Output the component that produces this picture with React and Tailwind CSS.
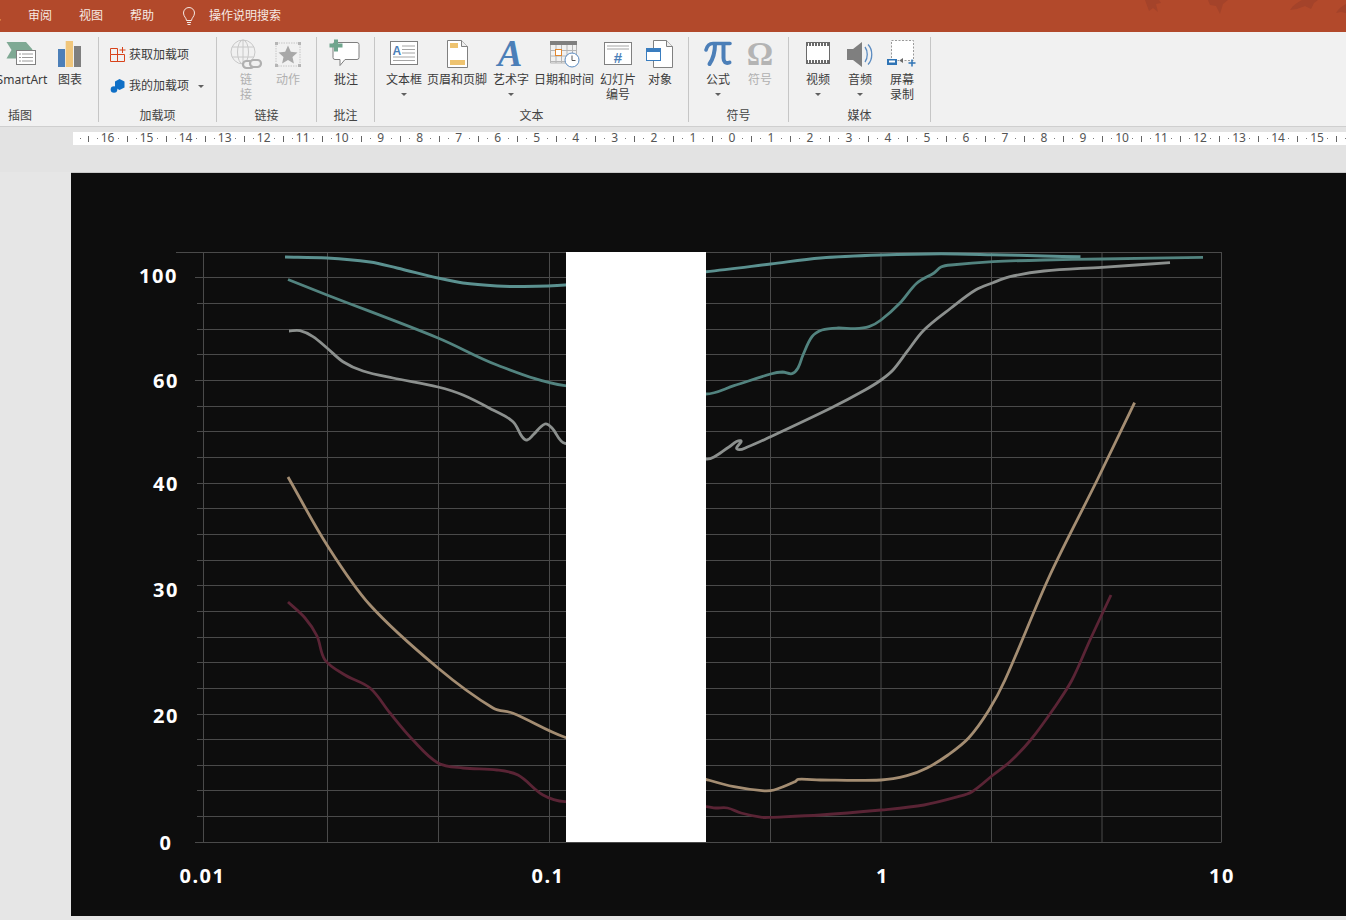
import React from "react";

const smooth = (p) => {
  const len = (u, v) => Math.hypot(u[0] - v[0], u[1] - v[1]) || 1;
  let d = `M${p[0][0]} ${p[0][1]}`;
  for (let i = 0; i < p.length - 1; i++) {
    const a = p[Math.max(0, i - 1)], b = p[i], c = p[i + 1], e = p[Math.min(p.length - 1, i + 2)];
    const seg = len(b, c) / 3;
    const la = len(a, c), le = len(b, e);
    const c1 = [b[0] + ((c[0] - a[0]) / la) * seg, b[1] + ((c[1] - a[1]) / la) * seg];
    const c2 = [c[0] - ((e[0] - b[0]) / le) * seg, c[1] - ((e[1] - b[1]) / le) * seg];
    d += `C${c1[0].toFixed(1)} ${c1[1].toFixed(1)} ${c2[0].toFixed(1)} ${c2[1].toFixed(1)} ${c[0]} ${c[1]}`;
  }
  return d;
};

const curves = [
  { c: "#5b9190", w: 3, p: [[285,257],[327,258],[370,262],[397,268],[438,278],[463,283],[497,286],[520,286.5],[565,285],[706,271.7],[770.6,264],[820.5,258],[881,255],[941,253.7],[993,254.7],[1044,256],[1080.5,256.7]] },
  { c: "#52837f", w: 2.8, p: [[288,279.5],[327,295],[438,338],[497,365],[565,385.7],[706,394],[734,385.7],[770.6,374],[782.6,372],[792,373.7],[798,368],[803,355],[812,336.7],[822,330],[838,328],[855,328.7],[869,326.7],[881,320],[900,303],[917,283],[934,273],[941,267],[951,265],[993,261.7],[1044,260],[1102,259],[1203,257.3]] },
  { c: "#8c908e", w: 2.8, p: [[289,331],[300,330.7],[313,336.7],[327,348],[343,361.7],[363,371],[393,378],[438,387],[463,395],[493,410],[513,421.7],[522,436.7],[527,440],[533,435],[545,424],[552,428],[565,443.3],[706,459],[714,457],[729,447],[740.6,440.7],[737,449],[748,446.7],[770.6,436.7],[831,408],[865,390],[881,380],[893,370],[907,351.7],[924,330],[951,308],[975.5,290],[993,282.7],[1010,276.7],[1044,271],[1102,267.3],[1170,262.7]] },
  { c: "#a48d72", w: 2.8, p: [[288,477],[327,545],[370,605],[438,668],[493,708],[513,713.3],[565,737.3],[706,779.3],[734,786.7],[762,790.7],[774,790],[795,781.7],[798,779.3],[820.5,780],[881,780],[907,775.7],[927,768],[948,755],[968.6,738],[989,710],[1005,680],[1050,575],[1097.7,479],[1134.6,402.7]] },
  { c: "#5a2435", w: 2.8, p: [[288,602],[305,618],[317,636],[325,660],[345,675],[370,688],[390,713],[412,739],[438,763],[463,768],[497,770],[518,775],[543,795],[565,801.7],[706,806.7],[715.5,808],[727.5,808],[741,813],[762,817.3],[770.6,817.3],[820.5,815],[881,810],[924,805],[958,796.7],[972,791.7],[993,775],[1010,761.7],[1030.6,740],[1055,706.7],[1072,680],[1090,640],[1111,595]] },
];

const hLines = Array.from({ length: 24 }, (_, i) => Math.floor(252.3 + i * 25.652) + 0.5);
const vLines = [203.5, 327.5, 438.5, 549.5, 770.5, 881, 991.5, 1102, 1221.5];
const yLabels = [["100", 139, 282.5], ["60", 153, 388], ["40", 153, 491], ["30", 153, 597], ["20", 153, 722.5], ["0", 159.5, 849.5]];
const xLabels = [["0.01", 179.5], ["0.1", 531.5], ["1", 876], ["10", 1209]];

const Caret = () => <span className="block w-0 h-0 border-x-[3px] border-x-transparent border-t-[3px] border-t-[#606060]" />;

const Ico = ({ x, w, children }) => (
  <svg width={w} height={35} viewBox={`${x} 37 ${w} 35`} className="block shrink-0">{children}</svg>
);

const Item = ({ x, w, l1, l2, caret, off, children }) => (
  <div className={`flex flex-col items-center shrink-0 ${off ? "text-[#b0b0b0]" : "text-[#3c3c3c]"}`} style={{ width: w }}>
    <Ico x={x} w={w}>{children}</Ico>
    <div className="h-[15px] leading-[15px] whitespace-nowrap">{l1}</div>
    {l2 && <div className="h-[15px] leading-[15px] whitespace-nowrap">{l2}</div>}
    {caret && <div className="h-[15px] flex items-center"><Caret /></div>}
  </div>
);

const Group = ({ width, label, children, className = "", labelClass = "text-center" }) => (
  <div className="h-[85px] mt-[5px] flex flex-col border-r border-[#c6c6c6] shrink-0" style={{ width }}>
    <div className={`h-[71px] flex ${className}`}>{children}</div>
    <div className={`h-[14px] leading-[16px] text-[#444444] ${labelClass}`}>{label}</div>
  </div>
);

const Dot = ({ cls = "" }) => <span className={`block w-px h-px bg-[#777777] ${cls}`} />;

const RulerCell = ({ n }) => (
  <div className="flex items-center w-[39.02px] shrink-0 h-full">
    <span className="block w-px h-[6px] bg-[#666666] shrink-0" />
    <div className="grid grid-cols-[1fr_20px_1fr] items-center flex-1">
      <Dot cls="justify-self-end" />
      <span className="text-center leading-[13px] mb-[2px]">{n}</span>
      <Dot cls="justify-self-start" />
    </div>
  </div>
);

export default function App() {
  const nums = [];
  for (let k = -16; k <= 16; k++) nums.push(Math.abs(k));
  return (
    <div className="w-[1346px] h-[920px] overflow-hidden bg-[#e6e6e6] flex flex-col text-[12px] font-['Noto_Sans','Noto_Sans_CJK_SC',sans-serif]">
      {/* title tabs */}
      <div className="relative h-[32px] bg-[#b2492b] flex items-center text-[#f6e9e4] shrink-0 overflow-hidden">
        <div className="flex items-center gap-[27px] ml-[-23px]">
          <span>插入</span><span>审阅</span><span>视图</span><span>帮助</span>
        </div>
        <svg width="16" height="20" viewBox="0 0 16 20" fill="none" stroke="#f6e9e4" strokeWidth="1" className="ml-[27px]">
          <path d="M5.500 14.500C5.500 12 2.500 10.500 2.500 7a5.500 5.500 0 0 1 11 0c0 3.500-3 5-3 7.500z" />
          <path d="M6 16.500h4M6.500 18.500h3" />
        </svg>
        <span className="ml-[12px]">操作说明搜索</span>
        <svg width="206" height="16" viewBox="1140 0 206 16" fill="#a4432a" className="absolute right-0 top-0">
          <path d="M1145 0h14l2 3-5 1 2 8-5-4-4 3z" />
          <path d="M1208 0h20l-5 4-3 10-4-8-6-1z" />
          <path d="M1290 10c3-5 8-8 12-10h16l-4 3-3 6-6-3-8 3z" />
          <path d="M1336 13c2-4 6-7 10-9v9l-5-1z" />
        </svg>
      </div>

      {/* ribbon */}
      <div className="h-[95px] bg-[#f1f1f1] border-b border-[#cfcfcf] flex shrink-0 overflow-hidden">
        <Group width={99} label="插图" labelClass="text-center w-[40px]">
          <div className="flex ml-[-2px]">
            <Item x={-2} w={48} l1="SmartArt">
              <path d="M6.500 42H26l6.500 7.500L26 58.500H6.500L11.500 50z" fill="#7fa994" />
              <rect x="16.500" y="50.500" width="19" height="14" fill="#fff" stroke="#808080" />
              <path d="M19 54h2M22 54h11M19 57.500h2M22 57.500h11M19 61h2M22 61h11" stroke="#9a9a9a" />
            </Item>
            <Item x={46} w={48} l1="图表">
              <rect x="58" y="49" width="7" height="18" fill="#4c7fb8" />
              <rect x="65.700" y="41" width="7.300" height="26" fill="#f0c67c" />
              <rect x="74" y="46" width="7" height="21" fill="#7f7f7f" />
            </Item>
          </div>
        </Group>

        <Group width={118} label="加载项" className="flex-col">
          <div className="flex items-center h-[36px] pl-[11px] text-[#3c3c3c]">
            <svg width="16" height="16" viewBox="0 0 16 16" fill="none" stroke="#d8431a" strokeWidth="1" className="mr-[3px]">
              <path d="M.5 7.500h14v7H.5zM.5 7.500v-6h7v13M12.500 0v6M9.500 3h6" />
            </svg>
            获取加载项
          </div>
          <div className="flex items-center h-[26px] pl-[11px] text-[#3c3c3c]">
            <svg width="16" height="16" viewBox="0 0 16 16" fill="#0f6fc6" className="mr-[3px]">
              <path d="M9.500 1l5 2.500v6L9.500 12 5 9.500v-6z" />
              <circle cx="4" cy="11.500" r="3.300" />
            </svg>
            我的加载项
            <span className="ml-[9px]"><Caret /></span>
          </div>
        </Group>

        <Group width={100} label="链接" className="pl-[8px]">
          <Item x={225} w={42} l1="链" l2="接" off>
            <g fill="none" stroke="#c8c8c8">
              <circle cx="243" cy="52" r="12" />
              <ellipse cx="243" cy="52" rx="5.500" ry="12" />
              <path d="M243 40v24M232 47h22M232 57h22" />
            </g>
            <g fill="#f1f1f1" stroke="#b0b0b0" strokeWidth="2.200">
              <rect x="243" y="61" width="11" height="7" rx="3.500" />
              <rect x="250" y="60" width="11" height="7" rx="3.500" />
            </g>
          </Item>
          <Item x={267} w={42} l1="动作" off>
            <rect x="276" y="43" width="24" height="23" fill="none" stroke="#c6c6c6" strokeDasharray="1.500 1" />
            <path d="M275 42h3v3h-3zM298 42h3v3h-3zM275 64h3v3h-3zM298 64h3v3h-3z" fill="#b5b5b5" />
            <path d="M288 45.500l2.800 6.200 6.700.7-5 4.500 1.400 6.600-5.900-3.400-5.900 3.400 1.400-6.600-5-4.500 6.700-.7z" fill="#a8a8a8" />
          </Item>
        </Group>

        <Group width={58} label="批注" className="pl-[8px]">
          <Item x={325} w={42} l1="批注">
            <path d="M335 42.500h22a2 2 0 0 1 2 2v13a2 2 0 0 1-2 2h-12l-5 6v-6h-5a2 2 0 0 1-2-2v-13a2 2 0 0 1 2-2z" fill="#fff" stroke="#7f7f7f" />
            <path d="M334 39.500h4v4h4.500v4H338v4h-4v-4h-4.500v-4h4.500z" fill="#6fa58d" />
          </Item>
        </Group>

        <Group width={314} label="文本" className="pl-[8px]">
          <Item x={383} w={42} l1="文本框" caret>
            <rect x="390.500" y="41.500" width="27" height="23" fill="#fff" stroke="#7f7f7f" />
            <text x="392.500" y="55" fontSize="12" fontWeight="700" fill="#4c7fb8" fontFamily="Liberation Sans">A</text>
            <path d="M402 46h13M402 49.500h13M402 53h13M393 57h22M393 60.500h22" stroke="#a5a5a5" />
          </Item>
          <Item x={425} w={64} l1="页眉和页脚">
            <path d="M447.500 40.500h14l6 6v21h-20z" fill="#fff" stroke="#808080" />
            <path d="M461.500 40.500v6h6" fill="#eee" stroke="#808080" />
            <rect x="450" y="43" width="8" height="5" fill="#eec370" />
            <rect x="450" y="60" width="15" height="5" fill="#eec370" />
          </Item>
          <Item x={489} w={44} l1="艺术字" caret>
            <text x="510" y="66" textAnchor="middle" fontSize="37" fontWeight="700" fontStyle="italic" fill="#4c7fb8" fontFamily="Liberation Serif">A</text>
          </Item>
          <Item x={533} w={62} l1="日期和时间">
            <rect x="550" y="41" width="27" height="4" fill="#7f7f7f" />
            <path d="M550.500 45v18h26V45M550.500 50.500h26M550.500 56h26M550.500 61.500h26M556 45v18M561.500 45v18M567 45v18M572.500 45v18" fill="none" stroke="#b5b5b5" />
            <rect x="555.500" y="49.500" width="6" height="6" fill="#fff" stroke="#e2872f" />
            <circle cx="572" cy="60" r="7" fill="#fff" stroke="#5b8bc0" />
            <path d="M572 55.500V60.500h3.500" fill="none" stroke="#555" />
          </Item>
          <Item x={595} w={46} l1="幻灯片" l2="编号">
            <rect x="604.500" y="42.500" width="27" height="22" fill="#fff" stroke="#808080" />
            <path d="M607 46h22M607 49h22" stroke="#a5a5a5" />
            <text x="618" y="62.500" textAnchor="middle" fontSize="15" fontWeight="700" fill="#4c7fb8" fontFamily="Liberation Sans">#</text>
          </Item>
          <Item x={641} w={38} l1="对象">
            <path d="M653.500 40.500h13l6 6v21h-19z" fill="#fff" stroke="#808080" />
            <path d="M666.500 40.500v6h6" fill="#eee" stroke="#808080" />
            <rect x="646.500" y="48.500" width="14" height="12" fill="#fff" stroke="#3a7dbf" />
            <rect x="646" y="48" width="15" height="4" fill="#3a7dbf" />
          </Item>
        </Group>

        <Group width={100} label="符号" className="pl-[8px]">
          <Item x={697} w={42} l1="公式" caret>
            <g fill="none" stroke="#4c7fb8" strokeLinecap="round">
              <path d="M706 50c1-4 3-6.500 7-6.500h17" strokeWidth="3.600" />
              <path d="M715 44c0 8-2 15-5.500 20" strokeWidth="4" />
              <path d="M723.500 44v14c0 4 2 6 6 4.500" strokeWidth="4" />
            </g>
          </Item>
          <Item x={739} w={42} l1="符号" off>
            <text x="760" y="65" textAnchor="middle" fontSize="33" fontWeight="700" fill="#b4b4b4" fontFamily="Liberation Serif">Ω</text>
          </Item>
        </Group>

        <Group width={142} label="媒体" className="pl-[8px]">
          <Item x={797} w={42} l1="视频" caret>
            <rect x="806.500" y="42.500" width="23" height="21" fill="#fff" stroke="#6a6a6a" />
            <path d="M806 44.500h24M806 61.500h24" stroke="#6a6a6a" strokeWidth="3" strokeDasharray="2 1" />
          </Item>
          <Item x={839} w={42} l1="音频" caret>
            <path d="M847 49h6l9-7v25l-9-7h-6z" fill="#7f7f7f" />
            <path d="M865 47c3 4 3 11 0 15M868 44.500c5 5 5 15 0 20" fill="none" stroke="#5b8bc0" strokeWidth="1.300" />
          </Item>
          <Item x={881} w={42} l1="屏幕" l2="录制">
            <rect x="891.500" y="40.500" width="22" height="20" fill="#fff" stroke="#9a9a9a" strokeDasharray="2 1.500" />
            <rect x="887" y="59" width="10" height="6" fill="#2f74b5" />
            <rect x="889" y="60.500" width="6" height="2" fill="#fff" />
            <path d="M900 60l3-2v5l-3-2z" fill="#6a6a6a" />
            <path d="M912 59.500v7M908.500 63h7" stroke="#2f74b5" strokeWidth="1.500" />
          </Item>
        </Group>
      </div>

      {/* ruler */}
      <div className="h-[45px] bg-[#e3e3e3] pt-[5px] pl-[73px] shrink-0 overflow-hidden">
        <div className="h-[13px] bg-white flex items-center text-[#555555] w-[1273px] overflow-hidden">
          <div className="w-[14.6px] shrink-0 flex justify-center"><Dot /></div>
          {nums.map((n, i) => <RulerCell key={i} n={n} />)}
        </div>
      </div>

      {/* slide area */}
      <div className="flex-1 pl-[71px] min-h-0">
        <div className="relative h-[744px] bg-[#0d0d0d] border-t border-[#c9c9c9] overflow-hidden">
          <svg width="1275" height="743" viewBox="71 173 1275 743" className="block">
            <g stroke="#4a4a4a" strokeWidth="1" fill="none">
              {hLines.map((y, i) => (
                <line key={i} x1={i === 0 ? 176 : i === 1 || i === 5 || i === 23 ? 195 : 197} x2="1221.500" y1={y} y2={y} />
              ))}
              {vLines.map((x) => <line key={x} x1={x} x2={x} y1="252" y2="842" />)}
            </g>
            {curves.map((s, i) => (
              <path key={i} d={smooth(s.p)} fill="none" stroke={s.c} strokeWidth={s.w} />
            ))}
            <g fill="#ffffff" fontSize="20" fontWeight="700" letterSpacing="1.500" fontFamily="Noto Sans">
              {yLabels.map(([t, x, y]) => <text key={t} x={x} y={y}>{t}</text>)}
              {xLabels.map(([t, x]) => <text key={t} x={x} y="882.500">{t}</text>)}
            </g>
          </svg>
          <div className="absolute left-[495px] top-[79px] w-[140px] h-[590px] bg-white" />
        </div>
      </div>
    </div>
  );
}
